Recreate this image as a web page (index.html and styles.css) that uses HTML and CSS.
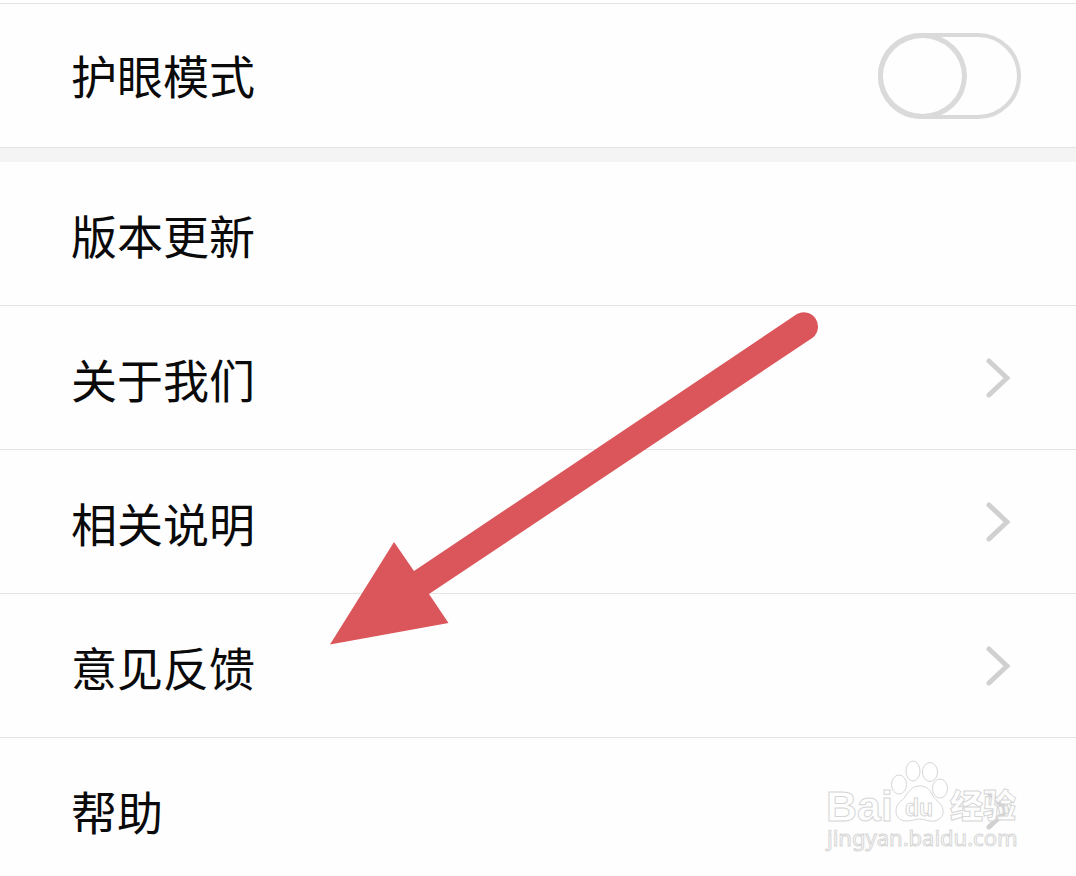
FILE: index.html
```
<!DOCTYPE html>
<html lang="zh-CN">
<head>
  <meta charset="UTF-8">
  <title>设置</title>
  <meta name="viewport" content="width=device-width, initial-scale=1.0">
  <link rel="stylesheet" href="styles.css">
</head>
<body>
  <main class="screen">
    <section class="group">
      <div class="row row-switch">
        <label for="eyeMode">护眼模式</label>
        <input type="checkbox" id="eyeMode" class="switch" role="switch">
      </div>
    </section>

    <nav class="group">
      <a class="row" href="#update">版本更新</a>
      <a class="row" href="#about">
        关于我们
        <svg class="chevron" viewBox="0 0 24 40"><path d="M3 3 L21 20 L3 37"/></svg>
      </a>
      <a class="row" href="#notes">
        相关说明
        <svg class="chevron" viewBox="0 0 24 40"><path d="M3 3 L21 20 L3 37"/></svg>
      </a>
      <a class="row" href="#feedback">
        意见反馈
        <svg class="chevron" viewBox="0 0 24 40"><path d="M3 3 L21 20 L3 37"/></svg>
      </a>
      <a class="row" href="#help">
        帮助
        <svg class="chevron" viewBox="0 0 24 40"><path d="M3 3 L21 20 L3 37"/></svg>
      </a>
    </nav>

    <!-- Arrow pointing at the feedback row -->
    <svg class="arrow" viewBox="0 0 490 335">
      <path d="M0 334.500 L64 232 L84 261 L467 4 A14.300 14.300 0 0 1 483 27.500 L99 284 L118.500 313 Z"/>
    </svg>

    <!-- Watermark -->
    <svg class="watermark" viewBox="0 0 200 100">
      <text class="mark-latin" x="1" y="61">Bai</text>
      <ellipse cx="74" cy="24.500" rx="7.500" ry="9.500"/>
      <ellipse cx="88" cy="11" rx="7" ry="10"/>
      <ellipse cx="105" cy="12" rx="7.500" ry="9.500"/>
      <ellipse cx="115" cy="28.500" rx="7.500" ry="9.500"/>
      <path d="M95 26 C87 26 83 32 80 37 C77 41 71 43 71 51 C71 58 76 61 82 61 C88 61 90 59 95 59 C100 59 103 62 109 61 C115 60 119 56 118 50 C117 43 111 41 108 36 C105 30 102 26 95 26 Z"/>
      <text class="mark-du" x="80" y="56">du</text>
      <text class="mark-cjk" x="125" y="58">经验</text>
      <text class="mark-url" x="2" y="86">jingyan.baidu.com</text>
    </svg>
  </main>
</body>
</html>
```
FILE: styles.css
```
body {
  margin: 0;
  background: #fefefe;
  color: #0a0a0a;
  font-family: "Noto Sans CJK SC", sans-serif;
}

.screen {
  position: relative;
  height: 100vh;
  overflow: hidden;
  padding-top: 3px;
  box-sizing: border-box;
}

.group:first-child {
  border-top: 1px solid #e4e4e4;
  border-bottom: 14px solid #f4f4f4;
}

.row {
  display: flex;
  align-items: center;
  justify-content: space-between;
  box-sizing: border-box;
  min-height: 144px;
  padding: 0 66px 0 71px;
  border-bottom: 1px solid #e4e4e4;
  color: inherit;
  font-size: 46px;
  line-height: 64px;
  text-decoration: none;
}

.row-switch {
  padding-right: 55px;
}

.row-switch label {
  padding-bottom: 4px;
}

/* Switch */
.switch {
  appearance: none;
  box-sizing: border-box;
  width: 143px;
  height: 86px;
  margin: 0;
  border: 4px solid #dadada;
  border-radius: 43px;
  background: #fefefe;
  cursor: pointer;
}

.switch::before {
  content: "";
  display: block;
  box-sizing: border-box;
  width: 89px;
  height: 86px;
  margin: -4px;
  border: 5px solid #dadada;
  border-radius: 50%;
}

.switch:checked::before {
  margin-left: 50px;
}

.chevron {
  width: 24px;
  height: 40px;
  fill: none;
  stroke: #d0d0d0;
  stroke-width: 5;
  stroke-linecap: round;
}

.arrow {
  position: absolute;
  left: 330px;
  top: 310px;
  width: 490px;
  fill: #db565b;
  pointer-events: none;
}

/* Watermark */
.watermark {
  position: absolute;
  right: 51px;
  top: 760px;
  width: 200px;
  fill: #ffffff;
  fill-opacity: 0.85;
  stroke: #d6d6d6;
  stroke-width: 1;
  overflow: visible;
  pointer-events: none;
}

.mark-latin {
  font: bold 43px "Liberation Sans", sans-serif;
}

.mark-du {
  font: bold 23px "Liberation Sans", sans-serif;
}

.mark-cjk {
  font: 900 33px "Noto Sans CJK SC", sans-serif;
}

.mark-url {
  font: 22px "Noto Sans", sans-serif;
}
```
